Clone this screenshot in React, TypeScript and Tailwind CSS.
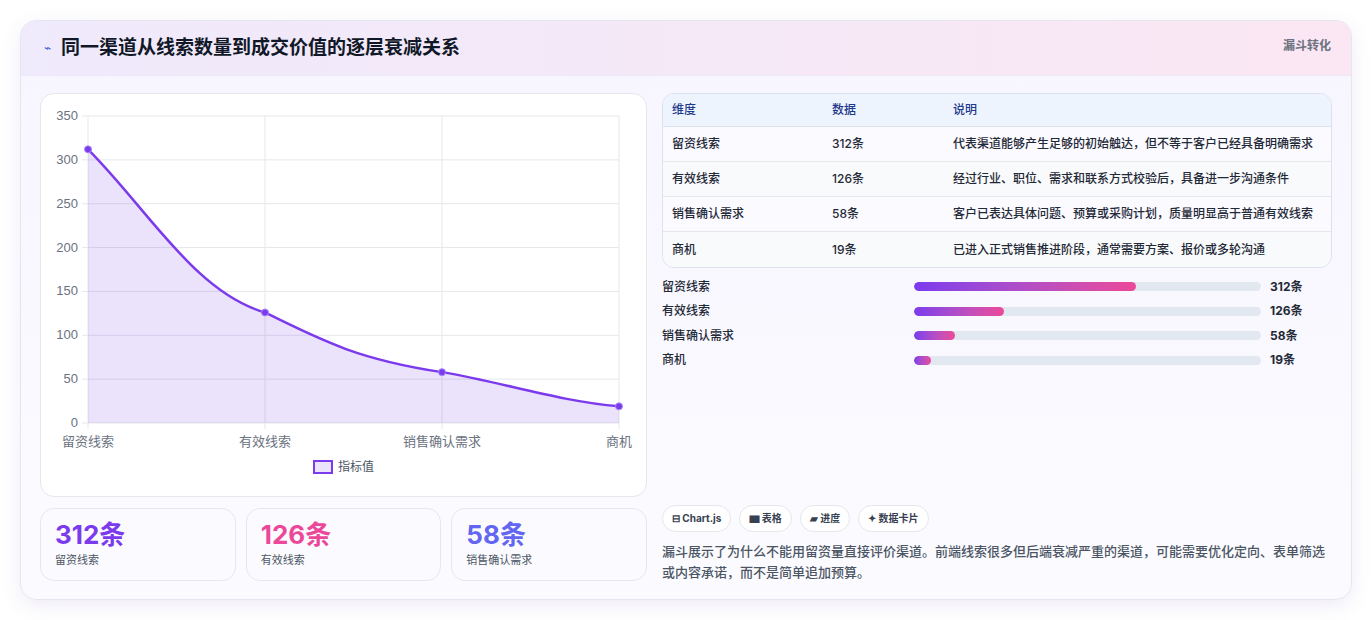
import React from "react";

const rows = [
  { k: "留资线索", v: 312, d: "代表渠道能够产生足够的初始触达，但不等于客户已经具备明确需求" },
  { k: "有效线索", v: 126, d: "经过行业、职位、需求和联系方式校验后，具备进一步沟通条件" },
  { k: "销售确认需求", v: 58, d: "客户已表达具体问题、预算或采购计划，质量明显高于普通有效线索" },
  { k: "商机", v: 19, d: "已进入正式销售推进阶段，通常需要方案、报价或多轮沟通" },
];

function Chart() {
  const x0 = 47, x1 = 578, y0 = 22, y1 = 329;
  const ys = (v: number) => y1 - (v / 350) * (y1 - y0);
  const xs = [0, 1, 2, 3].map((i) => x0 + (i * (x1 - x0)) / 3);
  const pts = rows.map((r, i) => [xs[i], ys(r.v)]);
  const d = `M${pts[0][0]},${pts[0][1]} C${pts[0][0] + 60},${pts[0][1] + 60} ${pts[1][0] - 70},${pts[1][1] - 20} ${pts[1][0]},${pts[1][1]} C${pts[1][0] + 60},${pts[1][1] + 30} ${pts[2][0] - 80},${pts[2][1] - 12} ${pts[2][0]},${pts[2][1]} C${pts[2][0] + 60},${pts[2][1] + 10} ${pts[3][0] - 60},${pts[3][1] - 5} ${pts[3][0]},${pts[3][1]}`;
  const ticks = [0, 50, 100, 150, 200, 250, 300, 350];
  const labels = ["留资线索", "有效线索", "销售确认需求", "商机"];
  return (
    <svg width="607" height="402" viewBox="0 0 607 402" style={{ fontFamily: "'Noto Sans CJK SC', sans-serif" }}>
      {ticks.map((t) => (
        <g key={t}>
          <line x1={x0 - 6} x2={x1} y1={ys(t)} y2={ys(t)} stroke="#e5e7eb" />
          <text x={x0 - 10} y={ys(t) + 4} fontSize="13" fill="#6b7280" textAnchor="end" fontFamily="Liberation Sans, sans-serif">{t}</text>
        </g>
      ))}
      {xs.map((x, i) => (
        <g key={i}>
          <line x1={x} x2={x} y1={y0} y2={y1 + 6} stroke="#e5e7eb" />
          <text x={x} y={y1 + 23} fontSize="13" fill="#6b7280" textAnchor="middle">{labels[i]}</text>
        </g>
      ))}
      <path d={`${d} L${x1},${y1} L${x0},${y1} Z`} fill="rgba(124,58,237,0.15)" />
      <path d={d} fill="none" stroke="#7c3aed" strokeWidth="2.5" />
      {pts.map((p, i) => (
        <circle key={i} cx={p[0]} cy={p[1]} r="3.5" fill="#7c3aed" stroke="#a78bfa" strokeWidth="1" />
      ))}
      <rect x="273" y="367" width="18" height="12" fill="rgba(124,58,237,0.15)" stroke="#7c3aed" strokeWidth="2" />
      <text x="297" y="377" fontSize="12" fill="#4b5563">指标值</text>
    </svg>
  );
}

export default function App() {
  return (
    <div className="w-[1372px] h-[620px] bg-white pt-[20px] px-[20px]" style={{ fontFamily: "Inter, 'Noto Sans CJK SC', sans-serif" }}>
      <div className="h-[580px] rounded-[16px] border border-[#e5e7f0] bg-gradient-to-b from-[#f7f5ff] to-[#fbfbff] shadow-[0_6px_20px_rgba(120,100,180,0.12)] overflow-hidden">
        <div className="h-[55px] flex items-center justify-between px-[20px] bg-gradient-to-r from-[#efeafc] to-[#fbe7f3] border-b border-[#ece8f6]">
          <div className="flex items-center gap-[10px] pl-[3px]">
            <span className="text-[#3b5bdb] text-[12px]">⌁</span>
            <span className="text-[19px] font-bold text-[#111827]">同一渠道从线索数量到成交价值的逐层衰减关系</span>
          </div>
          <span className="text-[12px] font-bold text-[#6b7280] self-start mt-[16px]">漏斗转化</span>
        </div>
        <div className="flex gap-[15px] px-[19px] pt-[17px]">
          <div className="w-[607px] flex flex-col gap-[11px]">
            <div className="h-[404px] rounded-[14px] border border-[#e5e7eb] bg-white">
              <Chart />
            </div>
            <div className="flex gap-[10px]">
              {[
                ["312条", "留资线索", "text-[#7c3aed]"],
                ["126条", "有效线索", "text-[#ec4899]"],
                ["58条", "销售确认需求", "text-[#6366f1]"],
              ].map(([n, l, c]) => (
                <div key={l} className="flex-1 h-[73px] rounded-[14px] border border-[#e5e7f0] bg-[#fbfbff] px-[14px] pt-[9px]">
                  <div className={`text-[26px] font-bold leading-[34px] ${c}`}>{n}</div>
                  <div className="text-[11px] text-[#4b5563]">{l}</div>
                </div>
              ))}
            </div>
          </div>
          <div className="flex-1 flex flex-col">
            <div className="rounded-[12px] border border-[#dbe2ee] overflow-hidden text-[12px] text-[#1f2937]">
              <div className="flex h-[33px] items-center bg-[#eef4fe] text-[#1e3a8a] font-medium border-b border-[#dbe2ee]">
                <div className="w-[169px] pl-[9px]">维度</div>
                <div className="w-[121px]">数据</div>
                <div>说明</div>
              </div>
              {rows.map((r, i) => (
                <div key={r.k} className={`flex h-[35px] items-center ${i < 3 ? "border-b border-[#e5e7eb]" : ""} ${i % 2 ? "bg-[#f9fafb]" : "bg-[#fbfaff]"}`}>
                  <div className="w-[169px] pl-[9px] font-medium">{r.k}</div>
                  <div className="w-[121px] font-medium">{r.v}条</div>
                  <div className="font-medium">{r.d}</div>
                </div>
              ))}
            </div>
            <div className="flex flex-col gap-[11.5px] mt-[12px]">
              {rows.map((r) => (
                <div key={r.k} className="flex items-center h-[13px] text-[12px] font-medium text-[#1f2937]">
                  <div className="w-[252px]">{r.k}</div>
                  <div className="w-[347px] h-[9px] rounded-full bg-[#e2e8f0] overflow-hidden">
                    <div className="h-full rounded-full bg-gradient-to-r from-[#7c3aed] to-[#ec4899]" style={{ width: `${Math.max(5, (r.v / 312) * 64)}%` }} />
                  </div>
                  <div className="ml-[9px] font-bold">{r.v}条</div>
                </div>
              ))}
            </div>
            <div className="mt-[138px] flex gap-[8px]">
              {["⊟ Chart.js", "▆ 表格", "▰ 进度", "✦ 数据卡片"].map((c) => (
                <span key={c} className="h-[27px] px-[9px] rounded-full border border-[#e5e7eb] bg-white text-[10px] font-bold text-[#374151] flex items-center">{c}</span>
              ))}
            </div>
            <p className="mt-[9px] text-[13px] leading-[21px] text-[#4b5563] font-medium">
              漏斗展示了为什么不能用留资量直接评价渠道。前端线索很多但后端衰减严重的渠道，可能需要优化定向、表单筛选或内容承诺，而不是简单追加预算。
            </p>
          </div>
        </div>
      </div>
    </div>
  );
}
